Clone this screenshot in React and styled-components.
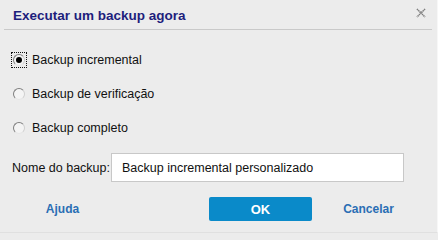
import React, { useState } from "react";
import styled, { createGlobalStyle } from "styled-components";

const Global = createGlobalStyle`
  html, body { margin: 0; padding: 0; background: #ececec; }
  body { font-family: "Liberation Sans", Arial, sans-serif; }
`;

const Dialog = styled.div`
  width: 438px;
  height: 233px;
  box-sizing: border-box;
  background: #ececec;
  border-right: 1px solid #f7f7f7;
  border-bottom: 1px solid #e0e0e0;
  display: flex;
  flex-direction: column;
`;

const Header = styled.div`
  display: flex;
  align-items: center;
  justify-content: space-between;
  margin: 0 5px 0 4px;
  padding: 0 6px 0 9px;
  border-bottom: 1px solid #c9c9c9;
  box-sizing: border-box;
  height: 30px;
`;

const Title = styled.h1`
  margin: 0;
  padding-top: 1px;
  font-size: 13.5px;
  font-weight: bold;
  color: #1e1e7c;
`;

const Close = styled.button`
  border: 0;
  background: none;
  padding: 0;
  width: 10px;
  height: 10px;
  margin-top: -4px;
  display: flex;
  cursor: pointer;
`;

const Body = styled.div`
  padding: 20px 12px 0 11px;
  display: flex;
  flex-direction: column;
`;

const Option = styled.label`
  display: flex;
  align-items: center;
  height: 20px;
  margin-bottom: 14px;
  font-size: 12.5px;
  color: #111;
  cursor: pointer;
`;

const Focus = styled.span`
  display: inline-flex;
  align-items: center;
  justify-content: center;
  width: 16px;
  height: 16px;
  margin-right: 5px;
  box-sizing: border-box;
  border: 1px dotted ${(p) => (p.$focused ? "#111" : "transparent")};
`;

const Circle = styled.span`
  width: 12px;
  height: 12px;
  border-radius: 50%;
  box-sizing: border-box;
  border: 1px solid #7e7e7e;
  border-right-color: #cfcfcf;
  border-bottom-color: #e6e6e6;
  background: #f4f4f4;
  display: flex;
  align-items: center;
  justify-content: center;

  &::after {
    content: "";
    width: 6px;
    height: 6px;
    border-radius: 50%;
    background: ${(p) => (p.$checked ? "#000" : "transparent")};
  }
`;

const NameRow = styled.div`
  display: flex;
  align-items: center;
  margin-top: 1px;
  font-size: 12.5px;
  color: #111;
`;

const NameLabel = styled.span`
  width: 99px;
  padding-left: 1px;
`;

const Input = styled.input`
  width: 293px;
  height: 29px;
  box-sizing: border-box;
  border: 1px solid #c8c8c8;
  background: #fff;
  padding: 0 10px;
  font-family: "Liberation Sans", Arial, sans-serif;
  font-size: 12.5px;
  color: #111;
  outline: none;
`;

const Footer = styled.div`
  display: flex;
  align-items: center;
  padding: 15px 0 0 11px;
`;

const LinkButton = styled.button`
  width: 103px;
  height: 24px;
  border: 0;
  background: none;
  font-family: "Liberation Sans", Arial, sans-serif;
  font-size: 12px;
  font-weight: bold;
  color: #2a6eb4;
  cursor: pointer;
  margin-right: ${(p) => p.$gap || 0}px;
`;

const Primary = styled.button`
  width: 103px;
  height: 24px;
  border: 0;
  border-radius: 2px;
  background: #0a8ac9;
  color: #fff;
  font-family: "Liberation Sans", Arial, sans-serif;
  font-size: 13px;
  font-weight: bold;
  margin-right: 5px;
  cursor: pointer;
`;

const options = [
  "Backup incremental",
  "Backup de verificação",
  "Backup completo",
];

export default function App() {
  const [sel, setSel] = useState(0);
  return (
    <>
      <Global />
      <Dialog>
        <Header>
          <Title>Executar um backup agora</Title>
          <Close aria-label="Fechar">
            <svg width="10" height="10" viewBox="0 0 10 10">
              <path
                d="M1 1 L9 9 M9 1 L1 9"
                stroke="#7a7a7a"
                strokeWidth="1.6"
                strokeDasharray="1.2 0.6"
              />
            </svg>
          </Close>
        </Header>
        <Body>
          {options.map((o, i) => (
            <Option key={o} onClick={() => setSel(i)}>
              <Focus $focused={i === sel}>
                <Circle $checked={i === sel} />
              </Focus>
              {o}
            </Option>
          ))}
          <NameRow>
            <NameLabel>Nome do backup:</NameLabel>
            <Input defaultValue="Backup incremental personalizado" />
          </NameRow>
        </Body>
        <Footer>
          <LinkButton $gap={95}>Ajuda</LinkButton>
          <Primary>OK</Primary>
          <LinkButton>Cancelar</LinkButton>
        </Footer>
      </Dialog>
    </>
  );
}
